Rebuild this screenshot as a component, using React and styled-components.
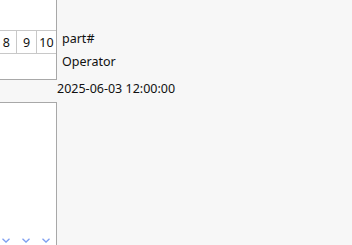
import React from "react";
import styled, { createGlobalStyle } from "styled-components";

const GlobalStyle = createGlobalStyle`
  html, body {
    margin: 0;
    padding: 0;
    background: #f7f7f7;
    font-family: "Noto Sans", "Open Sans", sans-serif;
    font-size: 12.5px;
    color: #111;
  }
`;

function Chevron() {
  return (
    <svg width="8" height="5" viewBox="0 0 8 5">
      <path d="M0.5 0.8 L4 4 L7.5 0.8" fill="none" stroke="#7f9ff0" strokeWidth="1.3" />
    </svg>
  );
}

export default function App() {
  const cells = ["8", "9", "10"];
  return (
    <>
      <GlobalStyle />
      <Layout>
        <TopPanel>
          <CellRow>
            {cells.map((c) => (
              <Cell key={c}>{c}</Cell>
            ))}
          </CellRow>
        </TopPanel>
        <Fields>
          <Field>part#</Field>
          <Field>Operator</Field>
        </Fields>
        <Spacer />
        <DateText>2025-06-03 12:00:00</DateText>
        <BottomPanel>
          <ChevronRow>
            {cells.map((c) => (
              <ChevronCell key={c}>
                <Chevron />
              </ChevronCell>
            ))}
          </ChevronRow>
        </BottomPanel>
        <div />
      </Layout>
    </>
  );
}

const Layout = styled.div`
  display: grid;
  grid-template-columns: 57px 1fr;
  grid-template-rows: 80px 22px 143px;
  height: 245px;
  overflow: hidden;
`;

const TopPanel = styled.div`
  background: #fff;
  border-right: 1px solid #a8a8a8;
  border-bottom: 1px solid #a8a8a8;
  padding-top: 30px;
  overflow: hidden;
  display: flex;
  justify-content: flex-end;
  align-items: flex-start;
`;

const CellRow = styled.div`
  display: flex;
  border-top: 1px solid #c8c8c8;
  border-bottom: 1px solid #c8c8c8;
  flex-shrink: 0;
`;

const Cell = styled.div`
  width: 19px;
  height: 22px;
  border-left: 1px solid #c8c8c8;
  display: flex;
  align-items: center;
  justify-content: center;
  &:first-child {
    border-left: none;
    width: 20px;
    justify-content: flex-end;
    padding-right: 6px;
    box-sizing: border-box;
  }
`;

const Fields = styled.div`
  display: flex;
  flex-direction: column;
  padding: 29px 0 0 5px;
`;

const Field = styled.div`
  height: 23px;
  line-height: 20px;
`;

const Spacer = styled.div``;

const DateText = styled.div`
  line-height: 18px;
  white-space: nowrap;
`;

const BottomPanel = styled.div`
  background: #fff;
  border-top: 1px solid #a8a8a8;
  border-right: 1px solid #a8a8a8;
  display: flex;
  align-items: flex-end;
`;

const ChevronRow = styled.div`
  display: flex;
  padding-left: 2px;
  padding-bottom: 1px;
`;

const ChevronCell = styled.div`
  width: 20px;
  height: 6px;
  display: flex;
  align-items: flex-start;
`;
